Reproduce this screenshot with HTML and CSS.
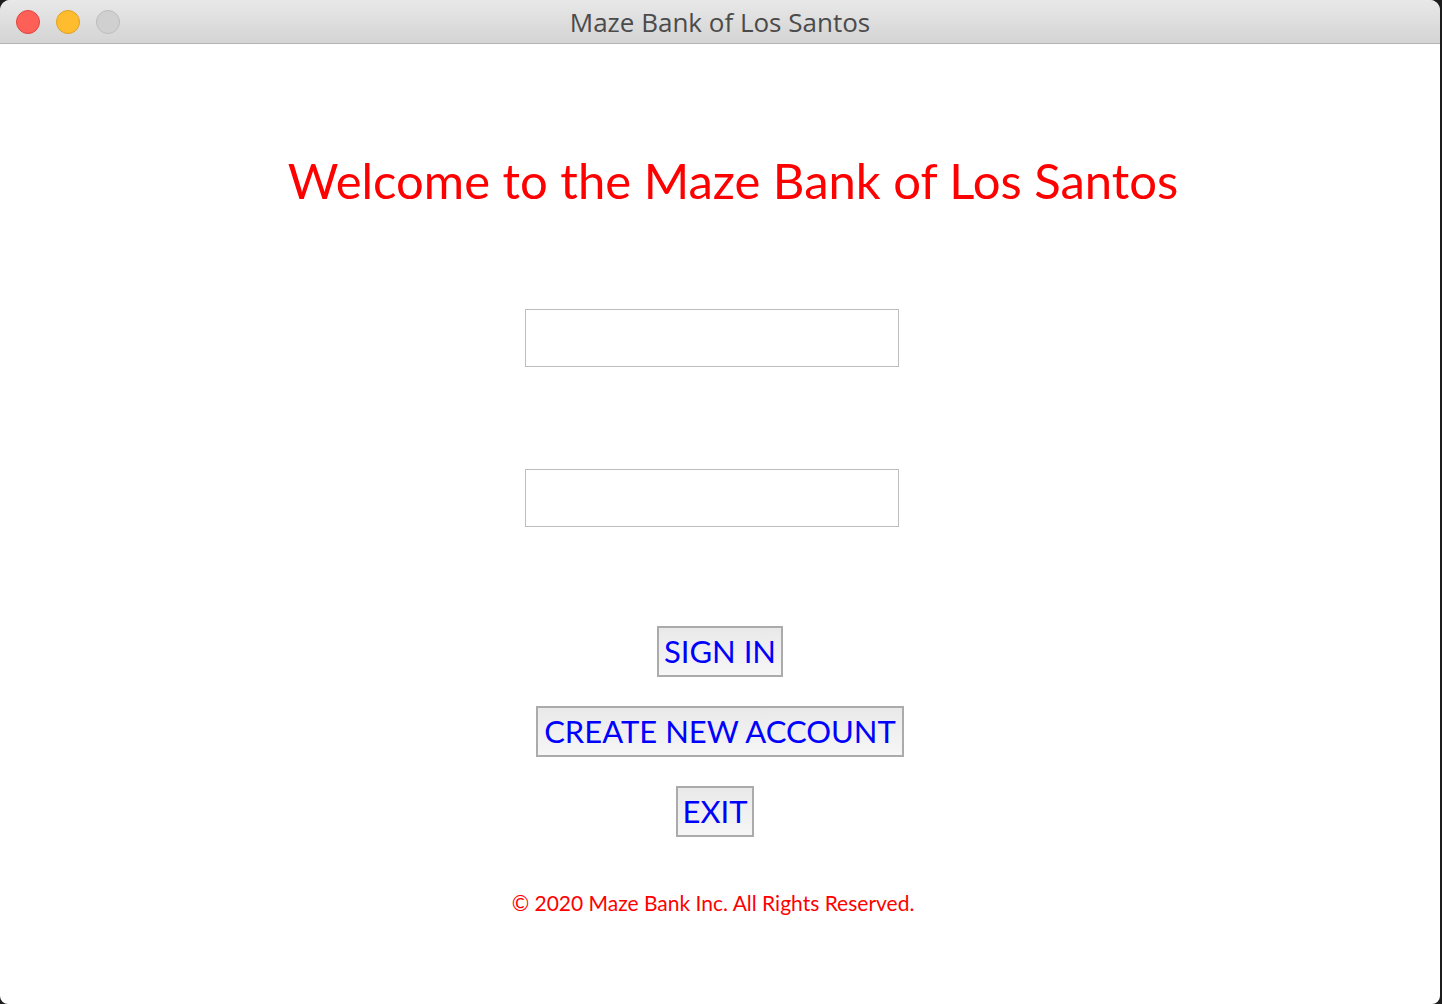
FILE: index.html
```html
<!DOCTYPE html>
<html>
<head>
<meta charset="utf-8">
<title>Maze Bank of Los Santos</title>
<link rel="stylesheet" href="styles.css">
</head>
<body>
<div class="window">
  <div class="titlebar">
    <div class="lights">
      <span class="light red"></span>
      <span class="light yellow"></span>
      <span class="light gray"></span>
    </div>
    <div class="title">Maze Bank of Los Santos</div>
  </div>
  <div class="content">
    <h1 class="heading">Welcome to the Maze Bank of Los Santos</h1>
    <input class="field first" type="text">
    <input class="field second" type="password">
    <div class="buttons">
      <button class="btn signin">SIGN IN</button>
      <button class="btn">CREATE NEW ACCOUNT</button>
      <button class="btn exit">EXIT</button>
    </div>
    <p class="footer">© 2020 Maze Bank Inc. All Rights Reserved.</p>
  </div>
</div>
</body>
</html>
```
FILE: styles.css
```css
html, body {
  margin: 0;
  padding: 0;
  background: #1c1c1c;
}
.window {
  width: 1440px;
  height: 1004px;
  background: #ffffff;
  border-radius: 10px 10px 8px 8px;
  overflow: hidden;
  display: flex;
  flex-direction: column;
}
.titlebar {
  height: 43px;
  flex: none;
  background: linear-gradient(#e8e8e8, #d4d4d4);
  border-bottom: 1px solid #b3b3b3;
  display: flex;
  align-items: center;
  position: relative;
}
.lights {
  display: flex;
  gap: 16px;
  padding-left: 16px;
  position: absolute;
  left: 0;
  top: 10px;
}
.light {
  width: 22px;
  height: 22px;
  border-radius: 50%;
  border: 1px solid;
}
.red { background: #fe5f57; border-color: #e0443e; }
.yellow { background: #febc2e; border-color: #dea123; }
.gray { background: #d0d0d0; border-color: #bcbcbc; }
.title {
  flex: 1;
  text-align: center;
  font-family: "Open Sans", "Liberation Sans", sans-serif;
  font-size: 26px;
  color: #4b4b4b;
  padding-top: 1px;
}
.content {
  display: flex;
  flex-direction: column;
  align-items: center;
  font-family: "Lato", "Noto Sans", sans-serif;
}
.heading {
  margin: 106px 0 0 26px;
  font-weight: normal;
  font-size: 49px;
  line-height: 60px;
  color: #ff0000;
}
.field {
  width: 374px;
  height: 58px;
  box-sizing: border-box;
  border: 1px solid #bdbdbd;
  background: #ffffff;
  padding: 0;
  margin: 0 0 0 -16px;
  outline: none;
}
.first { margin-top: 99px; }
.second { margin-top: 102px; }
.buttons {
  display: flex;
  flex-direction: column;
  align-items: center;
  gap: 29px;
  margin-top: 99px;
}
.btn {
  font-family: "Lato", "Noto Sans", sans-serif;
  font-size: 31px;
  line-height: 47px;
  color: #0000ff;
  background: linear-gradient(#e9e9e9, #f6f6f6);
  border: 2px solid #ababab;
  border-radius: 0;
  padding: 0 6px;
  margin: 0;
}
.signin { padding: 0 5px; }
.exit { margin-left: -10px; padding: 0 4px; }
.footer {
  margin: 53px 0 0 -14px;
  font-size: 21px;
  color: #ff0000;
}
```
